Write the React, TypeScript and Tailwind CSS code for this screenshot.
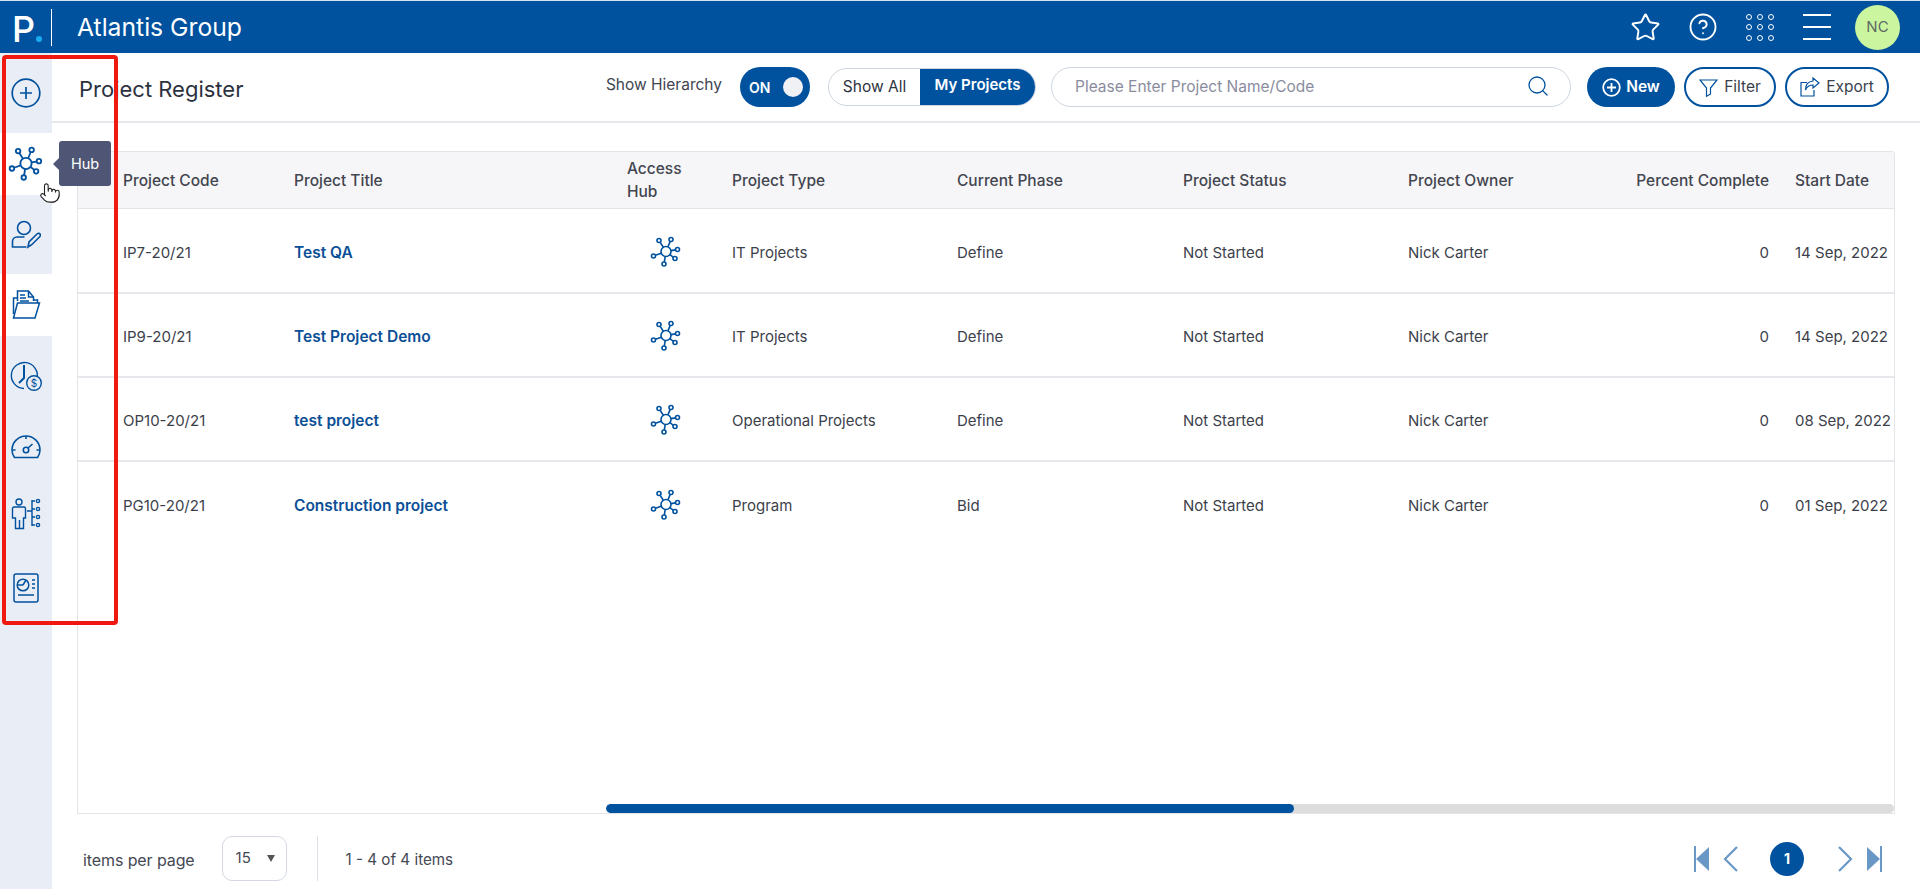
import React from "react";
import { Star, CircleHelp, Search, Pointer } from "lucide-react";

const BLUE = "#00529f";

function HubIcon({ size = 32, sw = 1.5 }: { size?: number; sw?: number }) {
  const nodes: [number, number, number][] = [
    [9, 4.5, 2],[21, 3.5, 2],[27.5, 13.5, 2],[25, 22.5, 2],[14, 28, 2],[3.5, 20, 2],
  ];
  return (
    <svg width={size} height={size} viewBox="0 0 32 32" fill="none" stroke={BLUE} strokeWidth={sw}>
      <circle cx="16" cy="15.5" r="5" />
      {nodes.map(([x, y, r], i) => {
        const dx = x - 16, dy = y - 15.5, d = Math.hypot(dx, dy);
        return (
          <g key={i}>
            <line x1={16 + (dx / d) * 5} y1={15.5 + (dy / d) * 5} x2={x - (dx / d) * r} y2={y - (dy / d) * r} />
            <circle cx={x} cy={y} r={r} />
          </g>
        );
      })}
    </svg>
  );
}

function PlusIcon() {
  return (
    <svg width="30" height="30" viewBox="0 0 30 30" fill="none" stroke={BLUE} strokeWidth="1.7">
      <circle cx="15" cy="15" r="13.8" />
      <path d="M15 9v12M9 15h12" />
    </svg>
  );
}

function UserEditIcon() {
  return (
    <svg width="30" height="30" viewBox="0 0 30 30" fill="none" stroke={BLUE} strokeWidth="1.6">
      <circle cx="13" cy="8" r="6.5" />
      <path d="M13.5 17H6a4.5 4.5 0 0 0-4.5 4.5V27h14" />
      <path d="M17 27l1-5 8-8c1-1 2.400-1 3 0s.6 1.800-.3 2.700l-8 8z" />
    </svg>
  );
}

function FolderIcon() {
  return (
    <svg width="30" height="30" viewBox="0 0 30 30" fill="none" stroke={BLUE} strokeWidth="1.5">
      <path d="M2.500 24V8h4" />
      <path d="M6.500 11V1h11l5 6v4" />
      <path d="M17.500 1v6h5" />
      <path d="M9 5h5M9 8h6M9 11h9" />
      <path d="M2.500 28l4-15h22l-4.500 15z" />
      <path d="M22.500 10h4v3" />
    </svg>
  );
}

function ClockIcon() {
  return (
    <svg width="32" height="32" viewBox="0 0 32 32" fill="none" stroke={BLUE} strokeWidth="1.4">
      <path d="M27 17.500A13 13 0 1 0 14 27.500" />
      <path d="M14 4v13l-5 5" strokeWidth="2" />
      <circle cx="24" cy="22" r="7.300" fill="#e9edf5" />
      <text x="24" y="25.500" textAnchor="middle" fontSize="10" fill={BLUE} stroke="none" fontFamily="Inter, sans-serif">$</text>
    </svg>
  );
}

function GaugeIcon() {
  return (
    <svg width="30" height="26" viewBox="0 0 30 26" fill="none" stroke={BLUE} strokeWidth="1.6">
      <path d="M3.500 24.500C1.800 22 1 19.500 1 17A14 14 0 0 1 29 17c0 2.500-.8 5-2.500 7.500z" />
      <circle cx="15" cy="17" r="2.700" />
      <path d="M17 15l4.500-4M15 3v3M1.500 17h3M25.500 17h3" />
    </svg>
  );
}

function PersonTreeIcon() {
  return (
    <svg width="30" height="32" viewBox="0 0 30 32" fill="none" stroke={BLUE} strokeWidth="1.4">
      <circle cx="8" cy="4" r="3" />
      <path d="M3 9h10a1.500 1.500 0 0 1 1.500 1.500V20H12.500V30.500H8.500V22 30.500H4.500V20H1.500V10.500A1.500 1.500 0 0 1 3 9z" />
      <path d="M21 2v26M16 13h5M21 3h3M21 11h3M21 19h3M21 27h3" />
      <circle cx="27" cy="3" r="1.600" />
      <circle cx="27" cy="11" r="1.600" />
      <circle cx="27" cy="19" r="1.600" />
      <circle cx="27" cy="27" r="1.600" />
    </svg>
  );
}

function ReportIcon() {
  return (
    <svg width="26" height="30" viewBox="0 0 26 30" fill="none" stroke={BLUE} strokeWidth="1.5">
      <rect x="1" y="1" width="24" height="28" rx="2" />
      <circle cx="10" cy="12" r="5.800" />
      <path d="M10 12l3-5M10 12H4.500M19 7h3M19 11h3M19 15h3M5 22h16" />
    </svg>
  );
}

function Sidebar() {
  return (
    <div className="w-[52px] shrink-0 flex flex-col bg-[#e9edf5]">
      <div className="h-[80px] flex items-center justify-center"><PlusIcon /></div>
      <div className="h-[62px] bg-white flex items-center justify-center"><HubIcon size={36} sw={1.6} /></div>
      <div className="h-[79px] flex items-center justify-center"><UserEditIcon /></div>
      <div className="h-[62px] bg-white flex items-center justify-center"><FolderIcon /></div>
      <div className="h-[82px] flex items-center justify-center"><ClockIcon /></div>
      <div className="h-[56px] flex items-center justify-center"><GaugeIcon /></div>
      <div className="h-[80px] flex items-center justify-center"><PersonTreeIcon /></div>
      <div className="h-[68px] flex items-center justify-center"><ReportIcon /></div>
    </div>
  );
}

function TopBar() {
  return (
    <div className="h-[53px] shrink-0 bg-[#00529f] border-t border-[#d7e2ee] flex items-center text-white">
      <div className="w-[52px] h-[37px] flex items-end justify-end border-r border-white pr-[9px] pb-[3px]">
        <span className="text-[36px] font-medium leading-[27px]">P</span>
        <span className="w-[6px] h-[6px] rounded-full bg-[#19aaf0] ml-[1px] mb-[1px]" />
      </div>
      <div className="ml-[25px] text-[24.700px] leading-none">Atlantis Group</div>
      <div className="ml-auto flex items-center">
        <Star size={31} strokeWidth={1.5} />
        <CircleHelp size={30} strokeWidth={1.5} className="ml-[27px]" />
        <div className="ml-[28px] grid grid-cols-3 gap-x-[5px] gap-y-[4.500px]">
          {Array.from({ length: 9 }).map((_, i) => (
            <span key={i} className="w-[6px] h-[6px] rounded-full border border-white" />
          ))}
        </div>
        <div className="ml-[29px] w-[28px] flex flex-col gap-[10px]">
          <span className="h-[2px] bg-white" />
          <span className="h-[2px] bg-white" />
          <span className="h-[2px] bg-white" />
        </div>
        <div className="ml-[24px] mr-[20px] w-[45px] h-[45px] rounded-full bg-[#ccf5a0] flex items-center justify-center text-[#5d6b63] text-[15px]">NC</div>
      </div>
    </div>
  );
}

function HeaderBar() {
  return (
    <div className="h-[70px] shrink-0 border-b-2 border-[#e6e8ec] flex items-center pl-[27px] pr-[31px]">
      <div className="text-[22px] text-[#2c3240] pt-[5px]">Project Register</div>
      <div className="ml-auto flex items-center">
        <span className="text-[15.500px] text-[#41454f] mr-[18px] mb-[4px]">Show Hierarchy</span>
        <div className="w-[70px] h-[40px] rounded-full bg-[#00529f] flex items-center justify-between pl-[9px] pr-[7px]">
          <span className="text-white text-[14px] font-semibold">ON</span>
          <span className="w-[20px] h-[20px] rounded-full bg-[#eff1f5]" />
        </div>
        <div className="ml-[18px] w-[208px] h-[38px] rounded-full border border-[#ced5e0] flex overflow-hidden text-[15.500px]">
          <div className="w-[91px] flex items-center justify-center text-[#2d3340]">Show All</div>
          <div className="flex-1 bg-[#00529f] text-white font-semibold text-[15px] flex items-center justify-center pb-[3px]">My Projects</div>
        </div>
        <div className="ml-[15px] w-[520px] h-[40px] rounded-full border border-[#ced5e0] flex items-center pl-[23px] pr-[20px] text-[15.500px] text-[#8a8c9e]">
          <span>Please Enter Project Name/Code</span>
          <Search size={24} strokeWidth={1.3} className="ml-auto text-[#00529f] mb-[2px]" />
        </div>
        <button className="ml-[16px] w-[88px] h-[40px] rounded-full bg-[#00529f] text-white text-[15.500px] font-semibold flex items-center justify-center gap-[5px]">
          <svg width="19" height="19" viewBox="0 0 19 19" fill="none" stroke="white" strokeWidth="1.800">
            <circle cx="9.500" cy="9.500" r="8.300" />
            <path d="M9.500 5v9M5 9.500h9" />
          </svg>
          New
        </button>
        <button className="ml-[9px] w-[92px] h-[40px] rounded-full border-2 border-[#00529f] text-[15.500px] text-[#3a3f4c] flex items-center justify-center gap-[6px]">
          <svg width="19" height="19" viewBox="0 0 19 19" fill="none" stroke={BLUE} strokeWidth="1.200">
            <path d="M1 2h17l-6.500 8v6l-4 2.300V10z" />
          </svg>
          Filter
        </button>
        <button className="ml-[9px] w-[104px] h-[40px] rounded-full border-2 border-[#00529f] text-[15.500px] text-[#3a3f4c] flex items-center justify-center gap-[6px]">
          <svg width="20" height="20" viewBox="0 0 20 20" fill="none" stroke={BLUE} strokeWidth="1.200">
            <path d="M7 5.500H1v13.500h13v-6" />
            <path d="M13 1l6 5-6 5V8c-4 0-6 1.500-7.500 5C5.500 8 8 4.500 13 4z" />
          </svg>
          Export
        </button>
      </div>
    </div>
  );
}

const COLS = "grid-cols-[45px_171px_333px_105px_225px_226px_225px_387px_150px]";

const rows = [
  { code: "IP7-20/21", title: "Test QA", type: "IT Projects", phase: "Define", date: "14 Sep, 2022" },
  { code: "IP9-20/21", title: "Test Project Demo", type: "IT Projects", phase: "Define", date: "14 Sep, 2022" },
  { code: "OP10-20/21", title: "test project", type: "Operational Projects", phase: "Define", date: "08 Sep, 2022" },
  { code: "PG10-20/21", title: "Construction project", type: "Program", phase: "Bid", date: "01 Sep, 2022" },
];

function Table() {
  return (
    <div className="mt-[28px] mx-[25px] h-[663px] border border-[#e2e4e8] rounded-t-[3px] flex flex-col overflow-hidden">
      <div className={`h-[57px] shrink-0 grid ${COLS} items-center bg-[#f6f6f8] border-b border-[#e2e4e8] text-[15.500px] font-medium text-[#43454f] leading-[23px]`}>
        <div />
        <div className="whitespace-nowrap">Project Code</div>
        <div>Project Title</div>
        <div>Access<br />Hub</div>
        <div>Project Type</div>
        <div>Current Phase</div>
        <div>Project Status</div>
        <div className="whitespace-nowrap flex justify-between pr-[26px]"><span>Project Owner</span><span>Percent Complete</span></div>
        <div className="whitespace-nowrap">Start Date</div>
      </div>
      <div className="flex-1 pt-[1px]">
        {rows.map((r, i) => (
          <div key={r.code} className={`h-[84px] grid ${COLS} items-center text-[15px] text-[#3c3f4b] pt-[4px] ${i < 3 ? "border-b-2 border-[#e6e8ec]" : ""}`}>
            <div />
            <div>{r.code}</div>
            <div className="font-semibold text-[15.500px] text-[#0b4f96]">{r.title}</div>
            <div className="pl-[23px] -mt-[2px]"><HubIcon size={32} sw={1.6} /></div>
            <div className="whitespace-nowrap">{r.type}</div>
            <div>{r.phase}</div>
            <div>Not Started</div>
            <div className="flex justify-between pr-[26px]"><span>Nick Carter</span><span>0</span></div>
            <div className="whitespace-nowrap">{r.date}</div>
          </div>
        ))}
      </div>
      <div className="h-[9px] shrink-0 ml-[528px] bg-[#dddddd] rounded-full overflow-hidden">
        <div className="h-full w-[688px] bg-[#00529f] rounded-full" />
      </div>
    </div>
  );
}

function Footer() {
  return (
    <div className="flex-1 flex items-start pt-[22px] pl-[31px] pr-[38px] text-[15px] text-[#444853]">
      <span className="text-[16px] tracking-[-0.1px] mt-[12px]">items per page</span>
      <div className="ml-[27px] w-[65px] h-[45px] rounded-[10px] border border-[#d3d8e2] flex items-center justify-between pl-[13px] pr-[11px]">
        <span>15</span>
        <span className="w-0 h-0 border-x-[4.500px] border-x-transparent border-t-[7px] border-t-[#555]" />
      </div>
      <div className="ml-[30px] w-px h-[45px] bg-[#dde0e6]" />
      <span className="ml-[28px] mt-[13px] text-[15.200px]">1 - 4 of 4 items</span>
      <div className="ml-auto flex items-center h-[45px]">
        <svg width="16" height="26" viewBox="0 0 16 26" fill="#6a98c6"><rect x="0" y="0" width="2" height="26" /><path d="M2 13L15 1v24z" /></svg>
        <svg className="ml-[13px]" width="16" height="28" viewBox="0 0 16 28" fill="none" stroke="#6a98c6" strokeWidth="2.200"><path d="M14 2L2 14l12 12" /></svg>
        <div className="ml-[31px] w-[34px] h-[34px] rounded-full bg-[#00529f] text-white text-[14px] font-bold flex items-center justify-center">1</div>
        <svg className="ml-[33px]" width="16" height="28" viewBox="0 0 16 28" fill="none" stroke="#6a98c6" strokeWidth="2.200"><path d="M2 2l12 12L2 26" /></svg>
        <svg className="ml-[13px]" width="16" height="26" viewBox="0 0 16 26" fill="#6a98c6"><rect x="14" y="0" width="2" height="26" /><path d="M14 13L1 1v24z" /></svg>
      </div>
    </div>
  );
}

export default function App() {
  return (
    <div className="relative h-[889px] w-[1920px] overflow-hidden bg-white flex flex-col" style={{ fontFamily: "Inter, sans-serif" }}>
      <TopBar />
      <div className="flex-1 flex min-h-0">
        <Sidebar />
        <div className="flex-1 min-w-0 flex flex-col">
          <HeaderBar />
          <Table />
          <Footer />
        </div>
      </div>
      {/* tooltip */}
      <div className="absolute left-[59px] top-[141px] w-[52px] h-[45px] rounded-[3px] bg-[#4f5675] text-white text-[14.500px] flex items-center justify-center">
        Hub
        <span className="absolute -left-[6px] top-[17px] w-0 h-0 border-y-[6px] border-y-transparent border-r-[6px] border-r-[#4f5675]" />
      </div>
      {/* cursor */}
      <Pointer size={22} strokeWidth={1.2} fill="white" className="absolute left-[39px] top-[182px] text-[#222]" />
      {/* annotation */}
      <div className="absolute left-[2px] top-[55px] w-[116px] h-[570px] border-[4px] border-[#f0190f] rounded-[4px]" />
    </div>
  );
}
